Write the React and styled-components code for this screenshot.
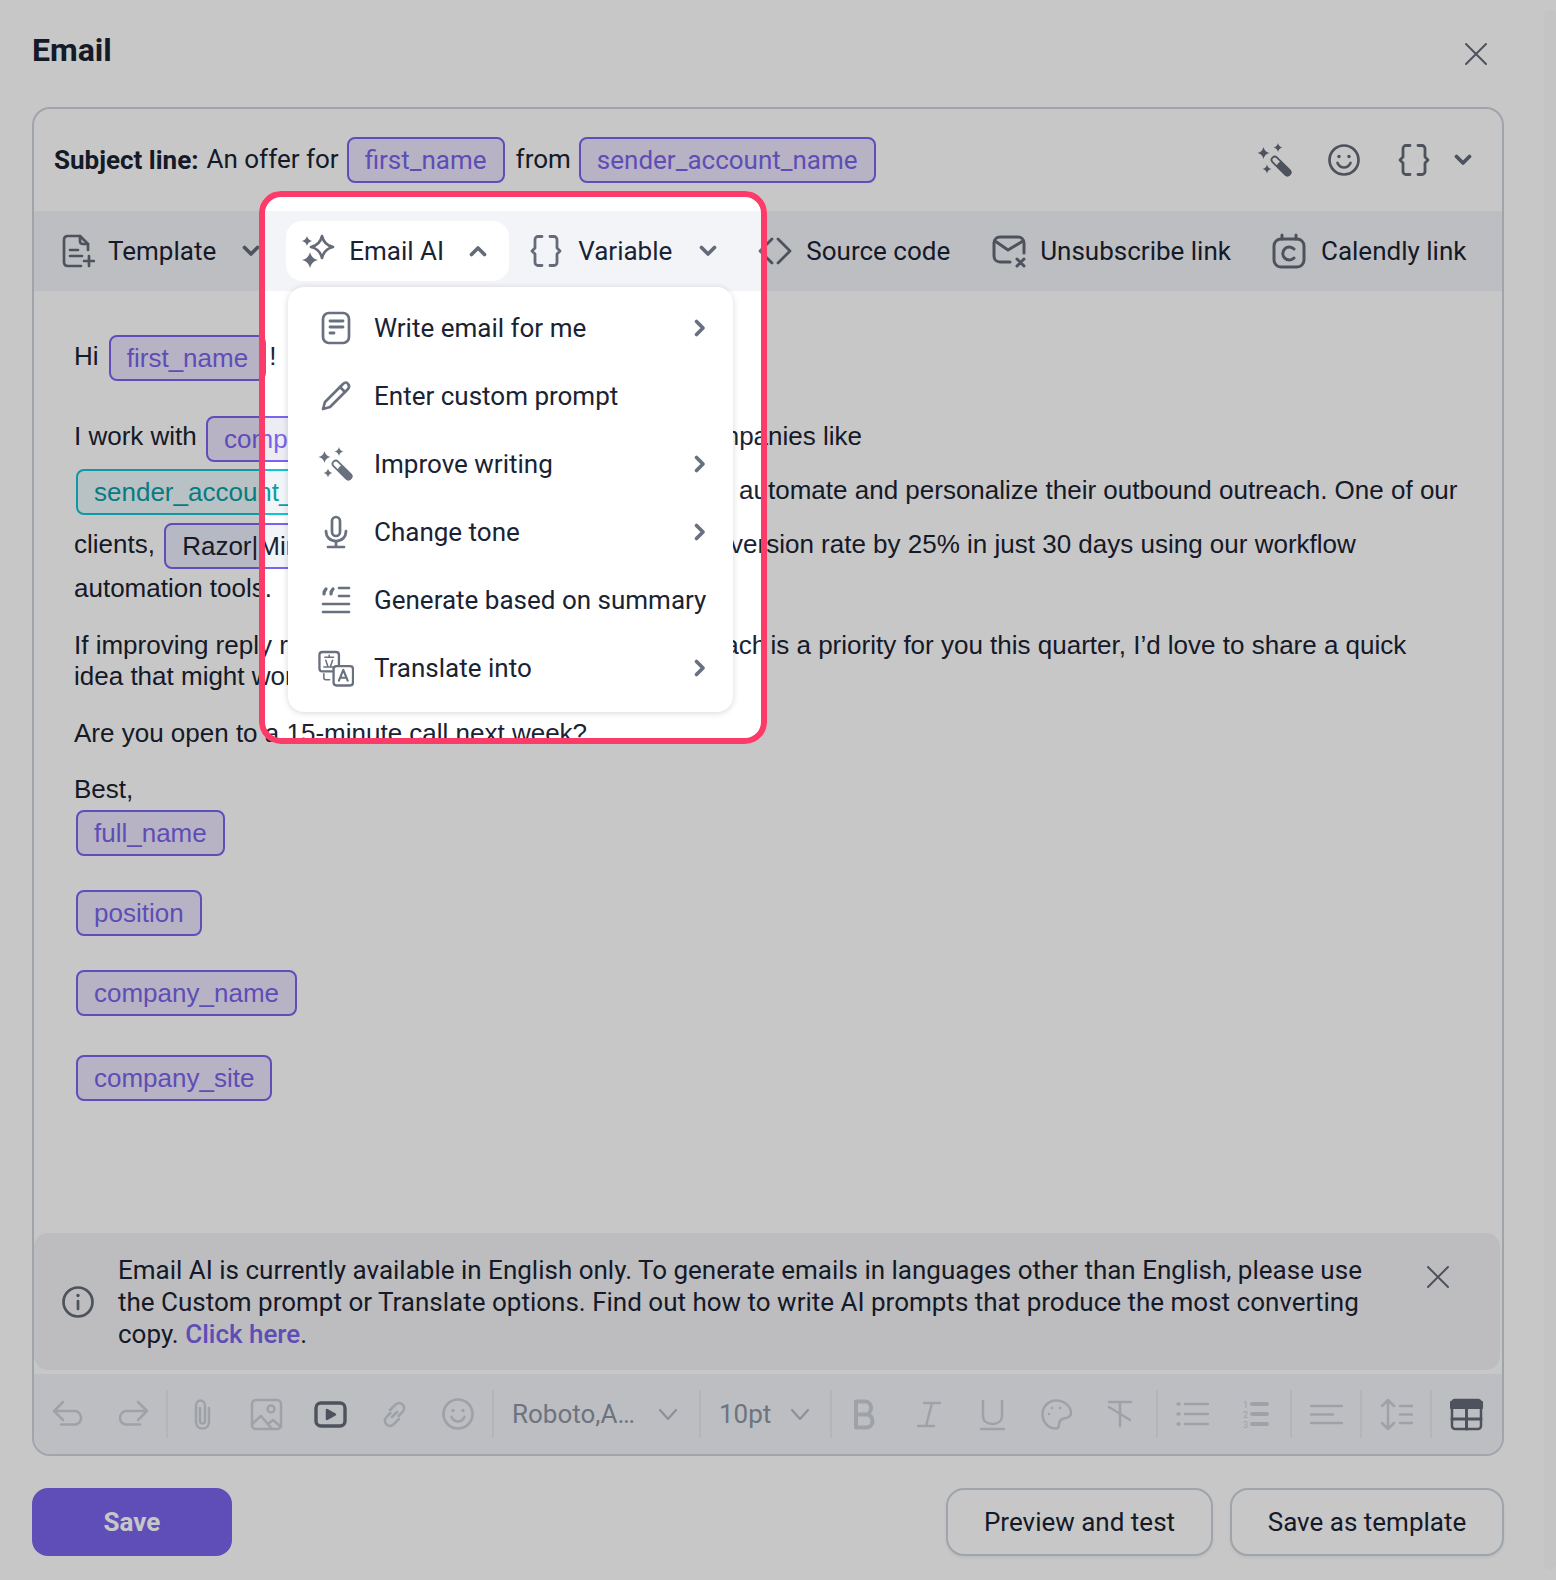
import React from "react";
import styled, { createGlobalStyle, css } from "styled-components";

const Global = createGlobalStyle`
  html, body { margin: 0; padding: 0; background: #fff; }
  #root { width: 1556px; height: 1580px; overflow: hidden; position: relative; }
  * { box-sizing: border-box; }
`;

const Page = styled.div`
  position: relative;
  width: 1556px;
  height: 1580px;
  overflow: hidden;
  display: flex;
  background: #fff;
  color: #1a2333;
  font-family: Roboto, "Liberation Sans", sans-serif;
`;
const Panel = styled.div`
  width: 1544px;
  padding: 0 40px 0 32px;
  display: flex;
  flex-direction: column;
`;
const ScrollTrack = styled.div`
  width: 12px;
  margin: 10px 0;
  background: #fbfbfc;
  border-radius: 6px;
`;
const Header = styled.header`
  height: 107px;
  display: flex;
  justify-content: space-between;
  padding-top: 30px;
`;
const Title = styled.h1`
  margin: 0;
  font-size: 32px;
  line-height: 40px;
  font-weight: 700;
`;
const CloseBtn = styled.span`
  display: flex;
  margin: 12px 16px 0 0;
  height: 26px;
  color: #636976;
`;
const Card = styled.section`
  height: 1349px;
  border: 2px solid #cdd2dc;
  border-radius: 18px;
  display: flex;
  flex-direction: column;
  overflow: hidden;
`;
const SubjectRow = styled.div`
  height: 102px;
  padding: 28px 30px 0 20px;
  display: flex;
  align-items: flex-start;
  font-size: 26px;
  line-height: 46px;
`;
const SubjectLabel = styled.b`
  font-weight: 700;
  margin-right: 8px;
`;
const SubjectText = styled.span`
  margin: ${(p) => p.$m};
  line-height: 44px;
`;
const chipBg = { teal: "#ecf8fa", plain: "#eaeefb", purple: "#ebe6fd" };
const Chip = styled.span`
  display: inline-block;
  height: 46px;
  line-height: 42px;
  padding: 0 16px;
  margin-left: ${(p) => p.$ml || 0}px;
  border: 2px solid ${(p) => (p.$tone === "teal" ? "#13c4d2" : "#7b63ef")};
  border-radius: 8px;
  background: ${(p) => chipBg[p.$tone || "purple"]};
  ${(p) =>
    p.$hole &&
    css`
      background: linear-gradient(to right, ${chipBg[p.$tone || "purple"]} 266px, ${p.$hole} 266px) fixed;
    `}
  color: ${(p) => (p.$tone === "teal" ? "#0a9ea8" : p.$tone === "plain" ? "#1a2333" : "#7a63ea")};
  font-family: "Liberation Sans", Arial, sans-serif;
  font-size: 26px;
  white-space: nowrap;
  vertical-align: middle;
`;
const SubjectChip = styled(Chip)`
  font-family: Roboto, sans-serif;
`;
const SubjectTools = styled.div`
  margin-left: auto;
  display: flex;
  align-items: center;
  height: 46px;
  color: #646a77;
`;
const Toolbar = styled.div`
  height: 80px;
  flex: none;
  background: #f3f4f8;
  display: flex;
  align-items: center;
  padding-left: 27px;
  font-size: 26px;
  white-space: nowrap;
  color: #1a2333;
`;
const ToolItem = styled.span`
  display: flex;
  align-items: center;
  gap: ${(p) => p.$gap || 13}px;
  margin-left: ${(p) => p.$ml || 0}px;
  color: #1a2333;
  svg { flex: none; color: #646a77; }
`;
const AiButton = styled(ToolItem)`
  height: 60px;
  width: 223px;
  padding-left: 15px;
  background: #fff;
  border-radius: 16px;
`;
const Chev = styled.span`
  display: flex;
  margin-left: ${(p) => p.$ml || 0}px;
  color: #646a77;
`;
const Body = styled.div`
  position: relative;
  flex: 1;
  min-height: 0;
  padding-top: 42px;
  padding-left: 40px;
  font-family: "Liberation Sans", Arial, sans-serif;
  font-size: 26px;
  line-height: 31px;
  white-space: nowrap;
`;
const Line = styled.div`
  height: ${(p) => p.$h}px;
  margin-top: ${(p) => p.$mt || 0}px;
  display: flex;
  align-items: center;
  gap: ${(p) => p.$gap || 0}px;
  margin-left: ${(p) => p.$ml || 0}px;
  white-space: pre;
  ${(p) =>
    p.$drop &&
    css`
      ${Chip} { margin-top: ${p.$drop}px; }
    `}
`;
const Tail = styled.span`
  margin-left: ${(p) => p.$ml || 0}px;
`;
const Banner = styled.div`
  height: 137px;
  flex: none;
  margin: 0 2px 0 0;
  background: #f2f3f7;
  border-radius: 14px;
  display: flex;
  align-items: center;
  padding: 0 32px 0 28px;
  font-size: 26px;
  line-height: 32px;
  color: #1a2333;
`;
const BannerIcon = styled.span`
  display: flex;
  color: #646a77;
  margin-right: 24px;
  margin-top: 0;
`;
const BannerText = styled.p`
  margin: 0;
  width: 1256px;
`;
const BannerLink = styled.a`
  color: #7a63ea;
  font-weight: 500;
`;
const BannerClose = styled.span`
  display: flex;
  align-self: flex-start;
  margin: 32px 0 0 52px;
  color: #646a77;
`;
const Editor = styled.div`
  height: 80px;
  margin-top: 4px;
  flex: none;
  background: #f3f4f8;
  display: flex;
  align-items: center;
  padding-left: 2px;
  font-size: 26px;
`;
const Btn = styled.span`
  width: 64px;
  height: 48px;
  flex: none;
  margin-left: ${(p) => p.$ml || 0}px;
  display: flex;
  align-items: center;
  justify-content: center;
  color: ${(p) => (p.$dark ? "#646a77" : "#cbd0d8")};
`;
const Sep = styled.i`
  width: 2px;
  height: 48px;
  flex: none;
  margin: 0 2px 0 ${(p) => p.$ml || 2}px;
  background: #e6e8ee;
`;
const SelectBox = styled.span`
  display: flex;
  align-items: center;
  justify-content: space-between;
  width: ${(p) => p.$w}px;
  padding: 0 ${(p) => p.$pr}px 0 16px;
  color: #8c95a4;
  font-size: 26px;
  flex: none;
  svg { color: #b4bac4; }
`;
const Footer = styled.footer`
  margin-top: 32px;
  display: flex;
  gap: 17px;
`;
const Primary = styled.button`
  width: 200px;
  height: 68px;
  margin-right: auto;
  border: 0;
  border-radius: 16px;
  background: #7a63ec;
  color: #fff;
  font: 700 26px Roboto, sans-serif;
`;
const Secondary = styled.button`
  width: ${(p) => p.$w}px;
  height: 68px;
  border: 2px solid #cdd2dc;
  border-radius: 18px;
  background: #fff;
  color: #1a2333;
  font: 400 26px Roboto, sans-serif;
  box-shadow: 0 2px 3px rgba(20, 30, 60, 0.06);
`;
const Menu = styled.div`
  position: absolute;
  left: 288px;
  top: 287px;
  width: 445px;
  height: 425px;
  background: #fff;
  border-radius: 16px;
  padding: 7px 0;
  box-shadow: 0 1px 6px rgba(30, 40, 70, 0.18);
`;
const MenuItem = styled.div`
  height: 68px;
  display: flex;
  align-items: center;
  font-size: 26px;
  padding-left: 86px;
  position: relative;
  color: #1a2333;
  white-space: nowrap;
`;
const MenuIcon = styled.span`
  position: absolute;
  left: 30px;
  top: 16px;
  width: 36px;
  height: 36px;
  display: flex;
  align-items: center;
  justify-content: center;
  color: #697080;
`;
const MenuArrow = styled.span`
  position: absolute;
  left: 400px;
  top: 22px;
  display: flex;
  color: #697080;
`;
const Spotlight = styled.div`
  position: absolute;
  left: 259px;
  top: 191px;
  width: 508px;
  height: 553px;
  border: 6px solid #fb3b68;
  border-radius: 22px;
  box-shadow: 0 0 0 3000px rgba(0, 0, 0, 0.22);
  pointer-events: none;
`;

const S = ({ w = 32, h = 32, vb = "0 0 32 32", sw = 2.7, children }) => (
  <svg width={w} height={h} viewBox={vb} fill="none" stroke="currentColor" strokeWidth={sw} strokeLinecap="round" strokeLinejoin="round">
    {children}
  </svg>
);
const Spark = ({ cx, cy, r, filled }) => (
  <path
    d={`M${cx} ${cy - r} Q${cx + r * 0.18} ${cy - r * 0.18} ${cx + r} ${cy} Q${cx + r * 0.18} ${cy + r * 0.18} ${cx} ${cy + r} Q${cx - r * 0.18} ${cy + r * 0.18} ${cx - r} ${cy} Q${cx - r * 0.18} ${cy - r * 0.18} ${cx} ${cy - r}Z`}
    fill={filled ? "currentColor" : "none"}
    stroke={filled ? "none" : "currentColor"}
  />
);
const X = ({ s = 24 }) => (
  <S w={s} h={s} vb="0 0 24 24" sw={2}>
    <path d="M2 2l20 20M22 2L2 22" />
  </S>
);
const ChevronD = () => (
  <S w={18} h={18} vb="0 0 18 18" sw={3.7}>
    <path d="M2.500 5.500l6.500 6.500 6.500-6.500" />
  </S>
);
const ChevronU = () => (
  <S w={18} h={18} vb="0 0 18 18" sw={3.7}>
    <path d="M2.500 12.500L9 6l6.500 6.500" />
  </S>
);
const ChevronR = () => (
  <S w={24} h={24} vb="0 0 24 24" sw={3.7}>
    <path d="M8.500 5.500L15 12l-6.500 6.500" />
  </S>
);
const ThinChev = () => (
  <S w={22} h={22} vb="0 0 22 22" sw={2.2}>
    <path d="M3 7l8 9 8-9" />
  </S>
);
const Braces = () => (
  <S w={32} h={34} vb="0 0 32 34" sw={2.8}>
    <path d="M12 2.500H8a3 3 0 0 0-3 3v8.500L2 17l3 3v8.500a3 3 0 0 0 3 3h4" />
    <path d="M20 2.500h4a3 3 0 0 1 3 3v8.500l3 3-3 3v8.500a3 3 0 0 1-3 3h-4" />
  </S>
);
const Wand = () => (
  <svg width="36" height="34" viewBox="0 0 36 34" fill="none" stroke="currentColor">
    <g transform="translate(24 23) rotate(45)">
      <rect x="-12" y="-3.200" width="24" height="6.400" rx="3.200" strokeWidth="1.800" />
      <rect x="-4" y="-3.800" width="17" height="7.600" rx="3.800" fill="currentColor" stroke="none" />
    </g>
    <Spark cx={6.500} cy={10} r={6} filled />
    <Spark cx={21} cy={4.500} r={4.500} filled />
    <Spark cx={10} cy={26} r={4.500} filled />
  </svg>
);
const Smile = () => (
  <S w={32} h={32}>
    <circle cx="16" cy="16" r="14.500" />
    <path d="M9.500 19c1.500 3 4 4.500 6.500 4.500s5-1.500 6.500-4.500" />
    <circle cx="11" cy="12.500" r="1.700" fill="currentColor" stroke="none" />
    <circle cx="21" cy="12.500" r="1.700" fill="currentColor" stroke="none" />
  </S>
);
const TemplateIcon = () => (
  <S w={34} h={34} vb="0 0 34 34">
    <path d="M27 16V10l-8-8H7C4.500 2 3 3.500 3 6v22c0 2.500 1.500 4 4 4h13" />
    <path d="M19 2v5c0 2 1 3 3 3h5M9 16h8M9 22h12M28 22v10M23 27h10" />
  </S>
);
const SparkleAi = () => (
  <S w={34} h={34} vb="0 0 34 34">
    <Spark cx={21} cy={13} r={11} />
    <g strokeWidth="0">
      <Spark cx={6} cy={7} r={5} filled />
      <Spark cx={9} cy={26} r={8} filled />
    </g>
  </S>
);
const CodeIcon = () => (
  <S w={36} h={30} vb="0 0 36 30" sw={2.8}>
    <path d="M15 3L3 15l12 12M21 3l12 12-12 12" />
  </S>
);
const UnsubIcon = () => (
  <S w={34} h={34} vb="0 0 34 34" sw={3}>
    <path d="M18 28H8c-3.500 0-6-2.500-6-6V9c0-3.500 2.500-6 6-6h18c3.500 0 6 2.500 6 6v10" />
    <path d="M3 7l13 9L31 7M25 25l7 7M32 25l-7 7" />
  </S>
);
const CalIcon = () => (
  <S w={34} h={36} vb="0 0 34 36" sw={3}>
    <rect x="2" y="6" width="30" height="28" rx="7" />
    <path d="M10 2v4M24 2v4M22 16a6.500 6.500 0 1 0 0 9" />
  </S>
);
const DocIcon = () => (
  <S w={30} h={34} vb="0 0 30 34">
    <rect x="2" y="2" width="26" height="30" rx="6" />
    <path d="M9 10h13M9 16h13M9 22h4" strokeWidth="2.800" />
  </S>
);
const PenIcon = () => (
  <S w={32} h={32}>
    <path d="M3 29l2-7L23 4c2-2 4-2 5 0 1.500 1.500 1.500 3 0 5L10 27z" />
    <path d="M20 7l5 5" />
  </S>
);
const MicIcon = () => (
  <S w={28} h={34} vb="0 0 28 34">
    <rect x="10" y="2" width="8" height="19" rx="4" />
    <path d="M4 16c0 6 4 10 10 10s10-4 10-10M14 26v6M6 32h16" />
  </S>
);
const SummaryIcon = () => (
  <S w={30} h={30} vb="0 0 30 30">
    <path d="M18 3h10M18 11h10M2 19h26M2 27h26" />
    <path d="M5 4c-1 1-2 3-2 5M12 4c-1 1-2 3-2 5" strokeWidth="3.200" />
  </S>
);
const TranslateIcon = () => (
  <svg width="37" height="37" viewBox="0 0 37 37" fill="none" stroke="currentColor" strokeWidth="2.400" strokeLinecap="round" strokeLinejoin="round">
    <rect x="1.500" y="1.500" width="20" height="20" rx="3" />
    <rect x="16" y="16" width="20" height="20" rx="3" fill="#fff" />
    <path d="M7 7h9M11.500 5v2M8 10l2 6M15 10l-2 6M6 17h11M6 24v4c0 1 1 2 2 2h4" strokeWidth="1.600" />
    <path d="M21.500 31l4.500-11 4.500 11M23 28h6" strokeWidth="2.200" />
  </svg>
);
const InfoIcon = () => (
  <S w={32} h={32}>
    <circle cx="16" cy="16" r="14.500" />
    <path d="M16 15v8" />
    <circle cx="16" cy="9.500" r="1.700" fill="currentColor" stroke="none" />
  </S>
);

const menuItems = [
  ["Write email for me", <DocIcon />, true],
  ["Enter custom prompt", <PenIcon />, false],
  ["Improve writing", <Wand />, true],
  ["Change tone", <MicIcon />, true],
  ["Generate based on summary", <SummaryIcon />, false],
  ["Translate into", <TranslateIcon />, true],
];

const Ed = {
  undo: <path d="M11 4l-9 9 9 9M2 13h21c3 0 6 3 6 7s-3 6.500-6 6.500H9" />,
  redo: <path d="M22 4l9 9-9 9M31 13H10c-3 0-6 3-6 7s3 6.500 6 6.500h14" />,
  clip: <path d="M23 10v14c0 3.500-2.500 6.500-6.500 6.500S10 27.500 10 24V8c0-3 2-5.500 4.500-5.500S19 5 19 8v15c0 1.500-1 2.500-2.500 2.500S14 24.500 14 23V10" />,
  image: (
    <>
      <rect x="2" y="2" width="29" height="29" rx="4" />
      <circle cx="21" cy="11" r="3.500" />
      <path d="M2 26l9-8 11 13M18 26l5-4 8 7" />
    </>
  ),
  video: (
    <>
      <rect x="2" y="5" width="29" height="23" rx="5" strokeWidth="3.400" />
      <path d="M13 12l8 4.500-8 4.500z" fill="currentColor" />
    </>
  ),
  link: <path d="M14 19l5-5M12 12l5-5c2.500-2.500 5.500-2.500 7.500-.5s2 5 0 7.500l-4 4M21 21l-5 5c-2.500 2.500-5.500 2.500-7.500.5s-2-5 0-7.500l4-4" />,
  palette: (
    <>
      <path d="M16 2.500C8 2.500 2.500 9 2.500 16.500S8.500 30.500 15.500 30.500c2.500 0 3.500-1.500 3.500-3.500 0-3.500 1.500-5.500 4.500-6.500 4-.5 7.500-2 7.500-5.500C31 8 24 2.500 16 2.500z" />
      <circle cx="9" cy="16" r="1.300" fill="currentColor" stroke="none" />
      <circle cx="12" cy="10" r="1.300" fill="currentColor" stroke="none" />
      <circle cx="20" cy="10" r="1.300" fill="currentColor" stroke="none" />
    </>
  ),
  clear: <path d="M5 4h22M16 4v24M5 9l21 13" />,
  ul: (
    <>
      <path d="M2 6h1M2 16h1M2 26h1" strokeWidth="3.400" />
      <path d="M9 6h23M9 16h23M9 26h23" />
    </>
  ),
  ol: (
    <>
      <g fill="currentColor" stroke="none" fontFamily="Roboto, sans-serif" fontSize="9">
        <text x="3" y="9.500">1</text>
        <text x="3" y="19.500">2</text>
        <text x="3" y="29.500">3</text>
      </g>
      <path d="M12 6h15M12 16h15M12 26h15" strokeWidth="4" />
    </>
  ),
  align: <path d="M1 8h31M1 16.500h22M1 25h31" />,
  lh: <path d="M8 2v29M2 8l6-6 6 6M2 25l6 6 6-6M20 8h13M20 16.500h13M20 25h13" />,
  b: <path d="M8 3.500h9c3.500 0 6 2.500 6 6.500s-2.500 6.500-6 6.500H8zM8 16.500h10c4 0 6.500 2.500 6.500 6.500s-2.500 6.500-6.500 6.500H8z" strokeWidth="4" />,
  i: <path d="M12 5h16M6 28h16M20 5l-6 23" />,
  u: <path d="M7 3v15c0 5 4 8 9.500 8s9.500-3 9.500-8V3M5 31h23" />,
  table: (
    <>
      <rect x="2" y="2" width="29" height="29" rx="3" />
      <path d="M2 7h29" strokeWidth="8" />
      <path d="M2 21h29M16.500 10v21" strokeWidth="3" />
    </>
  ),
};
const EdIcon = ({ name }) => (
  <svg width="33" height="33" viewBox="0 0 33 33" fill="none" stroke="currentColor" strokeWidth="2.500" strokeLinecap="round" strokeLinejoin="round">
    {Ed[name]}
  </svg>
);

export default function App() {
  return (
    <Page>
      <Global />
      <Panel>
        <Header>
          <Title>Email</Title>
          <CloseBtn>
            <X />
          </CloseBtn>
        </Header>
        <Card>
          <SubjectRow>
            <SubjectLabel>Subject line:</SubjectLabel>
            <SubjectText $m="0 8px 0 0">An offer for</SubjectText>
            <SubjectChip>first_name</SubjectChip>
            <SubjectText $m="0 8px 0 11px">from</SubjectText>
            <SubjectChip>sender_account_name</SubjectChip>
            <SubjectTools>
              <Wand />
              <Chev $ml={35}><Smile /></Chev>
              <Chev $ml={38}><Braces /></Chev>
              <Chev $ml={24}><ChevronD /></Chev>
            </SubjectTools>
          </SubjectRow>
          <Toolbar>
            <ToolItem>
              <TemplateIcon />
              Template
            </ToolItem>
            <Chev $ml={26}><ChevronD /></Chev>
            <AiButton $ml={26} $gap={14}>
              <SparkleAi />
              Email AI
              <Chev $ml={11}><ChevronU /></Chev>
            </AiButton>
            <ToolItem $ml={21} $gap={16}>
              <Braces />
              Variable
            </ToolItem>
            <Chev $ml={27}><ChevronD /></Chev>
            <ToolItem $ml={40} $gap={13}>
              <CodeIcon />
              Source code
            </ToolItem>
            <ToolItem $ml={42} $gap={14}>
              <UnsubIcon />
              Unsubscribe link
            </ToolItem>
            <ToolItem $ml={41} $gap={15}>
              <CalIcon />
              Calendly link
            </ToolItem>
          </Toolbar>
          <Body>
            <Line $h={46} $gap={3} $drop={4}>
              Hi <Chip>first_name</Chip>!
            </Line>
            <Line $h={46} $mt={34} $drop={6}>
              I work with <Chip $ml={2} $hole="#ececf3">company_name</Chip>{" and other very similar companies like"}
            </Line>
            <Line $h={46} $mt={8} $ml={2} $drop={4}>
              <Chip $tone="teal" $hole="#f1f5f7">sender_account_name</Chip>
              {" to help them grow and then "}
              <Tail $ml={33}>automate and personalize their outbound outreach. One of our</Tail>
            </Line>
            <Line $h={46} $mt={8} $drop={4}>
              clients, <Chip $tone="plain" $ml={2} $hole="#f3f4f8">Razor|Mind Marketing</Chip>{" has increased their conversion rate by 25% in just 30 days using our workflow"}
            </Line>
            <Line $h={31} $mt={6}>automation tools.</Line>
            <Line $h={31} $mt={26}>
              If improving reply rates and scaling your cold email outreach
              <Tail $ml={-3}> is a priority for you this quarter, I’d love to share a quick</Tail>
            </Line>
            <Line $h={31}>idea that might work for your team as well.</Line>
            <Line $h={31} $mt={26}>Are you open to a 15-minute call next week?</Line>
            <Line $h={31} $mt={25}>Best,</Line>
            <Line $h={46} $mt={5} $ml={2}><Chip>full_name</Chip></Line>
            <Line $h={46} $mt={34} $ml={2}><Chip>position</Chip></Line>
            <Line $h={46} $mt={34} $ml={2}><Chip>company_name</Chip></Line>
            <Line $h={46} $mt={39} $ml={2}><Chip>company_site</Chip></Line>
          </Body>
          <Banner>
            <BannerIcon><InfoIcon /></BannerIcon>
            <BannerText>
              Email AI is currently available in English only. To generate emails in languages other than English, please use the Custom prompt or Translate options. Find out how to write AI prompts that produce the most converting copy. <BannerLink>Click here</BannerLink>.
            </BannerText>
            <BannerClose><X /></BannerClose>
          </Banner>
          <Editor>
            <Btn><EdIcon name="undo" /></Btn>
            <Btn><EdIcon name="redo" /></Btn>
            <Sep />
            <Btn><EdIcon name="clip" /></Btn>
            <Btn><EdIcon name="image" /></Btn>
            <Btn $dark><EdIcon name="video" /></Btn>
            <Btn><EdIcon name="link" /></Btn>
            <Btn><Smile /></Btn>
            <Sep />
            <SelectBox $w={201} $pr={18}>Roboto,A…<ThinChev /></SelectBox>
            <Sep />
            <SelectBox $w={125} $pr={17}>10pt<ThinChev /></SelectBox>
            <Sep />
            <Btn $ml={-2}><EdIcon name="b" /></Btn>
            <Btn><EdIcon name="i" /></Btn>
            <Btn><EdIcon name="u" /></Btn>
            <Btn><EdIcon name="palette" /></Btn>
            <Btn><EdIcon name="clear" /></Btn>
            <Sep $ml={4} />
            <Btn><EdIcon name="ul" /></Btn>
            <Btn><EdIcon name="ol" /></Btn>
            <Sep />
            <Btn><EdIcon name="align" /></Btn>
            <Sep />
            <Btn><EdIcon name="lh" /></Btn>
            <Sep />
            <Btn $dark><EdIcon name="table" /></Btn>
          </Editor>
        </Card>
        <Footer>
          <Primary>Save</Primary>
          <Secondary $w={267}>Preview and test</Secondary>
          <Secondary $w={274}>Save as template</Secondary>
        </Footer>
      </Panel>
      <ScrollTrack />
      <Menu>
        {menuItems.map(([label, icon, arrow]) => (
          <MenuItem key={label}>
            <MenuIcon>{icon}</MenuIcon>
            {label}
            {arrow && <MenuArrow><ChevronR /></MenuArrow>}
          </MenuItem>
        ))}
      </Menu>
      <Spotlight />
    </Page>
  );
}
